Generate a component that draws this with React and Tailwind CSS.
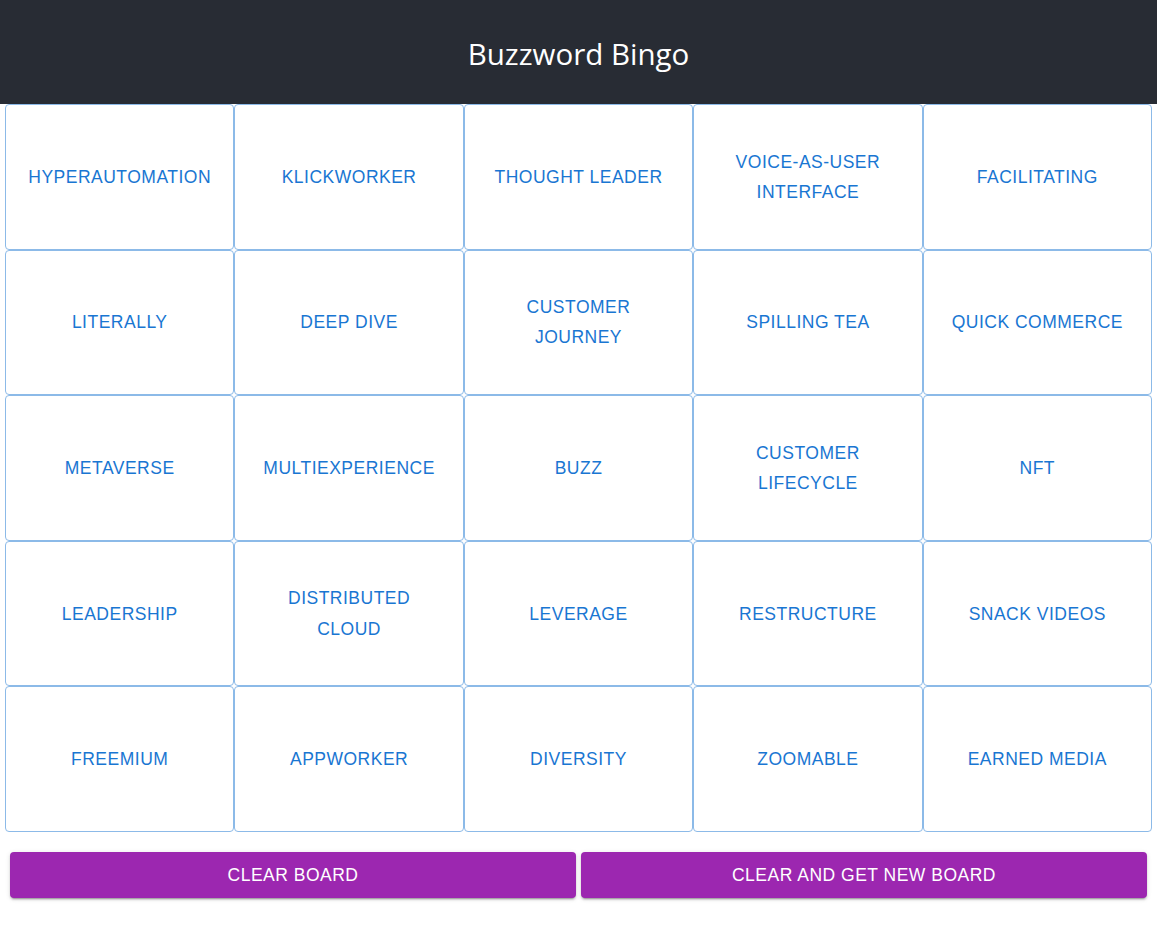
import React from 'react';

const words = [
    'Hyperautomation', 'Klickworker', 'Thought Leader', 'Voice-as-User Interface', 'Facilitating',
    'Literally', 'Deep Dive', 'Customer Journey', 'Spilling Tea', 'Quick Commerce',
    'Metaverse', 'Multiexperience', 'Buzz', 'Customer Lifecycle', 'NFT',
    'Leadership', 'Distributed Cloud', 'Leverage', 'Restructure', 'Snack Videos',
    'Freemium', 'Appworker', 'Diversity', 'Zoomable', 'Earned Media',
];

const App = () => {
    return (
        <div className="min-h-screen bg-white">
            {/* Header */}
            <header className="h-[104px] bg-[#282c34] flex items-center justify-center">
                <h1 className="text-white text-[29.5px] font-['Open_Sans',sans-serif] pt-[4px]">Buzzword Bingo</h1>
            </header>

            {/* Board */}
            <div className="px-[5px] grid grid-cols-5">
                {words.map((w) => (
                    <button
                        key={w}
                        className="h-[145.6px] border border-[#8cbae8] rounded-[4px] bg-white text-[#1976d2] uppercase text-[17.5px] leading-[1.72] tracking-[0.5px] font-['Liberation_Sans',Arial,sans-serif] px-[20px] flex items-center justify-center text-center"
                    >
                        {w}
                    </button>
                ))}
            </div>

            {/* Actions */}
            <div className="mt-[20px] px-[10px] flex gap-[5px]">
                <button className="flex-1 h-[46px] bg-[#9c27b0] text-white uppercase text-[17.5px] tracking-[0.5px] font-['Liberation_Sans',Arial,sans-serif] rounded-[4px] shadow-[0_3px_1px_-2px_rgba(0,0,0,0.2),0_2px_2px_0_rgba(0,0,0,0.14),0_1px_5px_0_rgba(0,0,0,0.12)]">
                    Clear Board
                </button>
                <button className="flex-1 h-[46px] bg-[#9c27b0] text-white uppercase text-[17.5px] tracking-[0.5px] font-['Liberation_Sans',Arial,sans-serif] rounded-[4px] shadow-[0_3px_1px_-2px_rgba(0,0,0,0.2),0_2px_2px_0_rgba(0,0,0,0.14),0_1px_5px_0_rgba(0,0,0,0.12)]">
                    Clear and get new board
                </button>
            </div>
        </div>
    );
};

export default App;
